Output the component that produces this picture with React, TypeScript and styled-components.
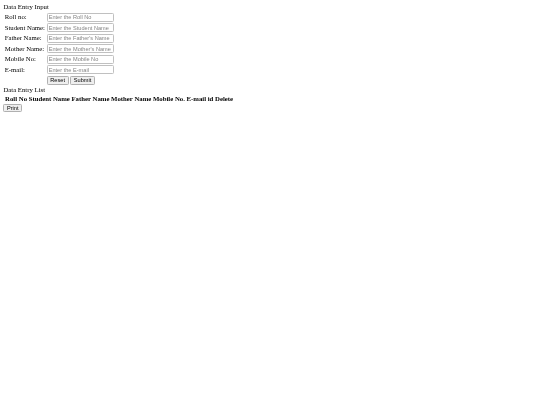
import styled, { createGlobalStyle } from "styled-components";

const Global = createGlobalStyle`
  body {
    margin: 0;
    background: #fff;
    color: #000;
    font-family: "Liberation Serif", "Times New Roman", serif;
    font-size: 6.75px;
  }
`;

const Page = styled.div`
  padding: 3.4px;
  filter: blur(0.2px);
`;

const Title = styled.div`
  height: 7.6px;
  line-height: 7.6px;
`;

const Form = styled.div`
  display: grid;
  grid-template-columns: 42px 67px;
  row-gap: 1.6px;
  align-items: center;
  padding: 1.8px 0 1px 1.3px;
`;

const Label = styled.label`
  line-height: 7.6px;
`;

const Field = styled.input`
  box-sizing: border-box;
  width: 67px;
  height: 8.9px;
  margin: 0;
  padding: 0 1px;
  border: 1px solid #c0c0c0;
  border-radius: 1.3px;
  font-family: "Liberation Sans", Arial, sans-serif;
  font-size: 5.625px;
  outline: none;

  &::placeholder {
    color: #858585;
    opacity: 1;
  }
`;

const Actions = styled.div`
  grid-column: 2;
  display: flex;
  gap: 1.7px;
`;

const Button = styled.button`
  box-sizing: border-box;
  height: 8.9px;
  margin: 0;
  padding: 1px 2.6px 0;
  background: #efefef;
  border: 1px solid #b0b0b0;
  border-radius: 1.3px;
  font-family: "Liberation Sans", Arial, sans-serif;
  font-size: 5.625px;
  line-height: 1;
  color: #000;
`;

const ListTable = styled.table`
  border-collapse: collapse;
  margin: 0.9px 0 0.9px 0.85px;

  th {
    padding: 0 0.85px;
    height: 8.6px;
    line-height: 7.6px;
    font-weight: bold;
    white-space: nowrap;
  }
`;

const fields = [
  ["Roll no:", "Enter the Roll No"],
  ["Student Name:", "Enter the Student Name"],
  ["Father Name:", "Enter the Father's Name"],
  ["Mother Name:", "Enter the Mother's Name"],
  ["Mobile No:", "Enter the Mobile No"],
  ["E-mail:", "Enter the E-mail"],
];

const columns = ["Roll No", "Student Name", "Father Name", "Mother Name", "Mobile No.", "E-mail id", "Delete"];

export default function App() {
  return (
    <Page>
      <Global />
      <Title>Data Entry Input</Title>
      <Form>
        {fields.flatMap(([label, placeholder]) => [
          <Label key={label}>{label}</Label>,
          <Field key={placeholder} placeholder={placeholder} />,
        ])}
        <Actions>
          <Button>Reset</Button>
          <Button>Submit</Button>
        </Actions>
      </Form>
      <Title>Data Entry List</Title>
      <ListTable>
        <thead>
          <tr>
            {columns.map((c) => (
              <th key={c}>{c}</th>
            ))}
          </tr>
        </thead>
      </ListTable>
      <Button>Print</Button>
    </Page>
  );
}
